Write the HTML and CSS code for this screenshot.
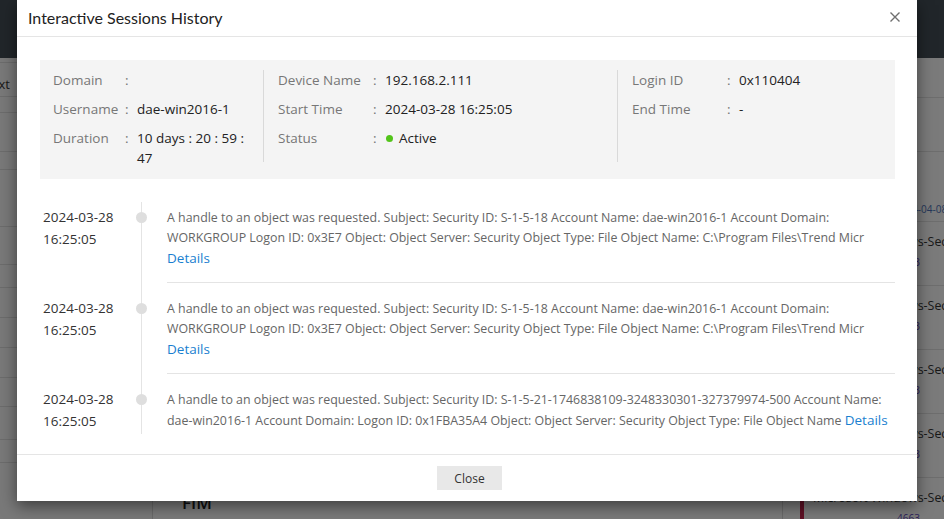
FILE: index.html
```html
<!DOCTYPE html>
<html lang="en">
<head>
<meta charset="utf-8">
<title>Interactive Sessions History</title>
<link rel="stylesheet" href="styles.css">
</head>
<body>
<div class="app">
  <div class="topbar"></div>
  <div class="app-body">
    <aside class="left-nav">
      <div class="nav-row h5"></div>
      <div class="nav-row h34"><span class="nav-text">Next</span></div>
      <div class="nav-row h16"></div>
      <div class="nav-row h39"></div>
      <div class="nav-row h18"></div>
      <div class="nav-row h57"></div>
      <div class="nav-row h38"></div>
      <div class="nav-row h23"></div>
      <div class="nav-row h30"></div>
      <div class="nav-row h30"></div>
      <div class="nav-row h30"></div>
      <div class="nav-row h29"></div>
      <div class="nav-row h33"></div>
      <div class="nav-row h23"></div>
    </aside>
    <main class="center">
      <h2 class="center-title">FIM</h2>
    </main>
    <aside class="right-list">
      <div class="rl-head"></div>
      <div class="rl-tabs"></div>
      <div class="rl-date">2024-04-08</div>
      <div class="rl-item"><div class="rl-title">Microsoft Windows-Security</div><div class="rl-sub">4663</div></div>
      <div class="rl-item"><div class="rl-title">Microsoft Windows-Security</div><div class="rl-sub">4663</div></div>
      <div class="rl-item"><div class="rl-title">Microsoft Windows-Security</div><div class="rl-sub">4663</div></div>
      <div class="rl-item"><div class="rl-title">Microsoft Windows-Security</div><div class="rl-sub">4663</div></div>
      <div class="rl-item rl-active"><div class="rl-title">Microsoft Windows-Security</div><div class="rl-sub">4663</div></div>
    </aside>
  </div>
</div>
<div class="overlay"></div>

<div class="modal">
  <div class="modal-header">
    <h1 class="modal-title">Interactive Sessions History</h1>
    <button class="modal-close" aria-label="Close">
      <svg width="10" height="10" viewBox="0 0 10 10"><path d="M0.5 0.5 L9.5 9.5 M9.5 0.5 L0.5 9.5" stroke="#6f6f6f" stroke-width="1.4" fill="none"/></svg>
    </button>
  </div>

  <div class="modal-body">
    <div class="info-panel">
      <div class="info-col col-1">
        <div class="info-row"><span class="lbl">Domain</span><span class="colon">:</span><span class="val"></span></div>
        <div class="info-row"><span class="lbl">Username</span><span class="colon">:</span><span class="val">dae-win2016-1</span></div>
        <div class="info-row"><span class="lbl">Duration</span><span class="colon">:</span><span class="val">10 days : 20 : 59 : 47</span></div>
      </div>
      <div class="info-col col-2">
        <div class="info-row"><span class="lbl">Device Name</span><span class="colon">:</span><span class="val">192.168.2.111</span></div>
        <div class="info-row"><span class="lbl">Start Time</span><span class="colon">:</span><span class="val">2024-03-28 16:25:05</span></div>
        <div class="info-row"><span class="lbl">Status</span><span class="colon">:</span><span class="val"><span class="status-dot"></span>Active</span></div>
      </div>
      <div class="info-col col-3">
        <div class="info-row"><span class="lbl">Login ID</span><span class="colon">:</span><span class="val">0x110404</span></div>
        <div class="info-row"><span class="lbl">End Time</span><span class="colon">:</span><span class="val">-</span></div>
      </div>
    </div>

    <div class="timeline">
      <div class="tl-item">
        <div class="tl-date">2024-03-28<br>16:25:05</div>
        <div class="tl-rail"><span class="tl-dot"></span></div>
        <div class="tl-content">A handle to an object was requested. Subject: Security ID: S-1-5-18 Account Name: dae-win2016-1 Account Domain: WORKGROUP Logon ID: 0x3E7 Object: Object Server: Security Object Type: File Object Name: C:\Program Files\Trend Micr <a class="details" href="#">Details</a></div>
      </div>
      <div class="tl-item">
        <div class="tl-date">2024-03-28<br>16:25:05</div>
        <div class="tl-rail"><span class="tl-dot"></span></div>
        <div class="tl-content">A handle to an object was requested. Subject: Security ID: S-1-5-18 Account Name: dae-win2016-1 Account Domain: WORKGROUP Logon ID: 0x3E7 Object: Object Server: Security Object Type: File Object Name: C:\Program Files\Trend Micr <a class="details" href="#">Details</a></div>
      </div>
      <div class="tl-item">
        <div class="tl-date">2024-03-28<br>16:25:05</div>
        <div class="tl-rail"><span class="tl-dot"></span></div>
        <div class="tl-content">A handle to an object was requested. Subject: Security ID: S-1-5-21-1746838109-3248330301-327379974-500 Account Name: dae-win2016-1 Account Domain: Logon ID: 0x1FBA35A4 Object: Object Server: Security Object Type: File Object Name <a class="details" href="#">Details</a></div>
      </div>
    </div>
  </div>

  <div class="modal-footer">
    <button class="btn-close">Close</button>
  </div>
</div>
</body>
</html>
```

FILE: styles.css
```css
* { box-sizing: border-box; }
html, body {
  margin: 0;
  padding: 0;
}
body {
  width: 944px;
  height: 519px;
  overflow: hidden;
  position: relative;
  font-family: "Open Sans", "Liberation Sans", sans-serif;
  color: #333;
}

/* ---------- background app ---------- */
.app {
  height: 519px;
  display: flex;
  flex-direction: column;
  background: #f3f3f3;
}
.topbar {
  height: 58px;
  background: #434c55;
  flex: none;
}
.app-body {
  flex: 1;
  display: flex;
  min-height: 0;
}
.left-nav {
  width: 153px;
  flex: none;
  background: #f2f2f2;
  border-right: 1px solid #d4d4d4;
  overflow: hidden;
}
.nav-row {
  border-bottom: 1px solid #d9d9d9;
  font-size: 13px;
  display: flex;
  align-items: center;
  justify-content: flex-end;
  padding-right: 142px;
  color: #333;
}
.h5 { height: 5px; }
.h16 { height: 16px; }
.h18 { height: 18px; }
.h23 { height: 23px; }
.h29 { height: 29px; }
.h30 { height: 30px; }
.h33 { height: 33px; }
.h34 { height: 34px; padding-top: 10px; }
.h38 { height: 38px; }
.h39 { height: 39px; }
.h57 { height: 57px; }
.nav-text { line-height: 1; }
.center {
  flex: 1;
  display: flex;
  flex-direction: column;
  justify-content: flex-end;
  padding-left: 29px;
  background: #f7f7f7;
}
.center-title {
  margin: 0 0 5px;
  font-size: 17px;
  font-weight: 600;
  color: #222;
}
.right-list {
  width: 162px;
  flex: none;
  background: #f6f6f6;
  border-left: 1px solid #d4d4d4;
  overflow: hidden;
}
.rl-head { height: 40px; border-bottom: 1px solid #dcdcdc; }
.rl-tabs { height: 54px; border-bottom: 1px solid #dcdcdc; }
.rl-date {
  height: 70px;
  padding-top: 50px;
  font-size: 10px;
  line-height: 14px;
  color: #4a6fb5;
  padding-left: 112px;
  border-bottom: 1px solid #dcdcdc;
  white-space: nowrap;
}
.rl-item {
  height: 64px;
  border-bottom: 1px solid #dcdcdc;
  padding-top: 10px;
  padding-left: 30px;
  white-space: nowrap;
}
.rl-title { font-size: 12.4px; color: #333; line-height: 20px; }
.rl-sub { font-size: 10px; color: #5a3fb5; line-height: 20px; padding-left: 84px; }
.rl-active {
  margin-left: 17px;
  border-left: 4px solid #c0204a;
  padding-left: 9px;
}
.rl-active .rl-sub { padding-left: 84px; }

.overlay {
  position: absolute;
  inset: 0;
  background: rgba(0, 0, 0, 0.5);
}

/* ---------- modal ---------- */
.modal {
  position: absolute;
  left: 17px;
  top: 0;
  width: 900px;
  height: 501px;
  background: #fff;
  box-shadow: 0 5px 15px rgba(0, 0, 0, 0.5);
  display: flex;
  flex-direction: column;
}
.modal-header {
  height: 37px;
  flex: none;
  border-bottom: 1px solid #e5e5e5;
  display: flex;
  align-items: center;
  justify-content: space-between;
  padding: 0 17px 2px 11px;
}
.modal-title {
  margin: 0;
  font-family: Lato, "Open Sans", sans-serif;
  font-size: 16px;
  font-weight: 400;
  color: #222;
}
.modal-close {
  border: 0;
  background: none;
  padding: 0;
  width: 10px;
  height: 10px;
  display: flex;
}

.modal-body {
  flex: 1;
  padding: 23px 22px 0 23px;
}

.info-panel {
  background: #f4f4f4;
  padding: 10px 0;
  height: 119px;
  display: grid;
  grid-template-columns: 223px 354px 1fr;
}
.info-col {
  display: flex;
  flex-direction: column;
  gap: 9px;
}
.col-1 { padding-left: 13px; padding-right: 12px; }
.col-2, .col-3 {
  border-left: 1px solid #d9d9d9;
  padding-left: 14px;
  margin-bottom: 7px;
}
.info-row {
  display: flex;
  font-size: 13.5px;
  line-height: 20px;
}
.lbl { color: #777; flex: none; width: 95px; }
.col-1 .lbl { width: 72px; }
.colon { color: #777; flex: none; width: 12px; }
.val { color: #222; flex: 1; }
.status-dot {
  display: inline-block;
  width: 7px;
  height: 7px;
  border-radius: 50%;
  background: #52c41a;
  margin: 0 6px 1px 1px;
  vertical-align: middle;
}

.timeline { margin-top: 13px; }
.tl-item {
  display: flex;
}
.tl-date {
  width: 101px;
  flex: none;
  padding: 14px 0 0 3px;
  font-size: 13.5px;
  line-height: 22px;
  color: #333;
}
.tl-rail {
  width: 1px;
  flex: none;
  background: #e4e4e4;
  position: relative;
}
.tl-item:first-child .tl-rail { margin-top: 10px; }
.tl-dot {
  position: absolute;
  left: -5px;
  top: 20px;
  width: 11px;
  height: 11px;
  border-radius: 50%;
  background: #dedede;
}
.tl-item:first-child .tl-dot { top: 10px; }
.tl-content {
  flex: 1;
  margin-left: 25px;
  padding: 16px 0 13px;
  border-bottom: 1px solid #e4e4e4;
  font-size: 12.4px;
  line-height: 20px;
  color: #666;
}
.tl-item:last-child .tl-content {
  border-bottom: 0;
  padding-bottom: 3px;
}
.details {
  color: #1a7fd0;
  font-size: 13.5px;
  text-decoration: none;
}

.modal-footer {
  flex: none;
  height: 47px;
  border-top: 1px solid #e5e5e5;
  display: flex;
  justify-content: center;
  align-items: center;
  padding-left: 5px;
}
.btn-close {
  width: 65px;
  height: 24px;
  border: 0;
  background: #e8e8e8;
  font-family: "Open Sans", sans-serif;
  font-size: 12px;
  color: #333;
  padding: 0;
}
```
